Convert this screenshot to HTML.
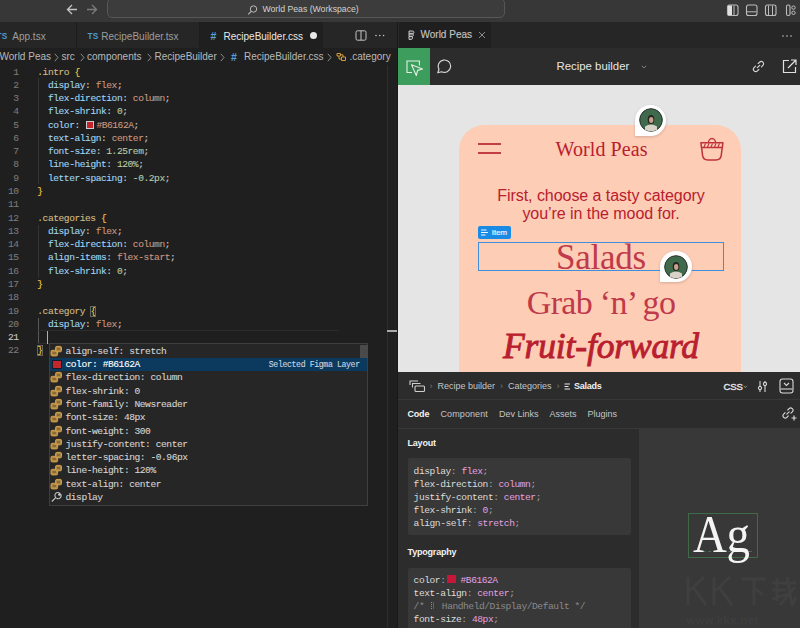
<!DOCTYPE html>
<html><head><meta charset="utf-8">
<style>
*{box-sizing:border-box;margin:0;padding:0}
html,body{width:800px;height:628px;overflow:hidden;background:#1f1f1f;font-family:"Liberation Sans",sans-serif;position:relative}
.a{position:absolute}
.mono{font-family:"Liberation Mono",monospace;font-size:9.6px;letter-spacing:-0.45px;white-space:pre;-webkit-text-stroke:0.1px currentColor}
.sans{font-family:"Liberation Sans",sans-serif;white-space:pre}
svg{display:block}
/* title */
#title{left:0;top:0;width:800px;height:22px;background:#373737}
#search{left:107px;top:-2px;width:398px;height:20px;border:1px solid #575757;border-radius:5px;background:#3c3c3c}
/* tabs */
#tabs{left:0;top:22px;width:398px;height:26px;background:#262626}
.tab{top:0;height:25px;color:#9d9d9d;font-size:10px;line-height:29px}
#crumb{left:0;top:48px;width:398px;height:17px;background:#1f1f1f;color:#b9b9b9;font-size:10px;line-height:18px}
/* editor */
.ln{left:0;width:18.6px;text-align:right;color:#7a7a7a;height:13.28px;line-height:13.28px}
.ln.cur{color:#c8c8c8}
.cl{left:37.3px;height:13.28px;line-height:13.28px;color:#cccccc}
.c{color:#cccccc}.p{color:#a0d6f2}.v{color:#cb977f}.n{color:#b8cca8}.s{color:#d3bc86}.b{color:#f2d23c}
.bb{outline:1px solid #666;outline-offset:-1px}
.sw{display:inline-block;width:8px;height:8px;background:#c4242c;border:1px solid #cfcfcf;margin:0 2px 0 1.3px;vertical-align:-1px}
.guide{width:1px;background:#333}
/* suggest */
#sugg{left:49px;top:343.3px;width:318.5px;height:162.9px;background:#262626;border:1px solid #3f3f3f}
.srow{left:0;width:316.5px;height:13.28px}
.srow.sel{background:#0c3a5e}
.srow .ic{position:absolute;left:0px;top:0.6px}
.srow .csw{display:block;width:7.6px;height:7.6px;background:#c0282d;left:3px;top:3px;outline:1px solid #1a1a2a}
.stxt{left:15.5px;top:0.6px;line-height:13.28px;color:#d4d4d4}
.sel .stxt{color:#ffffff}
.det{position:absolute;right:6.8px;top:0;line-height:13.28px;font-family:"Liberation Mono",monospace;font-size:8.2px;letter-spacing:-0.37px;color:#c9d6e3;white-space:pre;-webkit-text-stroke:0.1px currentColor}
/* right pane */
#rtabs{left:398px;top:22px;width:402px;height:26px;background:#262626}
#tool{left:398px;top:48px;width:402px;height:36.5px;background:#2c2c2c}
#preview{left:398px;top:84.5px;width:402px;height:287.5px;background:#e5e5e5;overflow:hidden}
#card{left:61px;top:40.5px;width:282px;height:300px;background:#fecdb6;border-radius:25px}
.red{color:#b8202f}
#dev{left:398px;top:372px;width:402px;height:256px;background:#2c2c2c}
.dt{font-size:9px;color:#c4c4c4;line-height:12px}
.dl{left:15.6px;height:13.2px;line-height:13.2px;color:#e8e8e8;-webkit-text-stroke:0 !important}
.k{color:#dcdcdc}.q{color:#a8a8a8}.w{color:#e6a0e0}.cm{color:#8a8a8a}
.csw2{display:inline-block;width:9.4px;height:8px;background:#c8163a;vertical-align:-0.5px;margin-left:1.2px;margin-right:4.5px}
.tok{display:inline-block;width:3px;height:7px;border-left:1px dotted #7a9a7a;border-right:1px solid #556b55;vertical-align:-0.5px;margin:0 2.5px 0 1.5px}
.bubble{background:#fff;border-radius:50% 50% 50% 0;box-shadow:0 1px 3px rgba(0,0,0,.18)}
.av{position:absolute;left:3.5px;top:3.5px;border-radius:50%;background:radial-gradient(circle at 50% 55%,#6b7a6a 0,#3b5a45 45%,#2c4434 100%)}
</style></head><body>

<!-- TITLE BAR -->
<div id="title" class="a">
  <svg class="a" style="left:66px;top:4px" width="12" height="11" viewBox="0 0 12 11"><path d="M6 1 L1.5 5.5 L6 10 M1.5 5.5 H11" fill="none" stroke="#c4c4c4" stroke-width="1.3"/></svg>
  <svg class="a" style="left:86px;top:4px" width="12" height="11" viewBox="0 0 12 11"><path d="M6 1 L10.5 5.5 L6 10 M10.5 5.5 H1" fill="none" stroke="#7c7c7c" stroke-width="1.3"/></svg>
  <div id="search" class="a"></div>
  <svg class="a" style="left:247px;top:4.5px" width="11" height="10" viewBox="0 0 11 10"><circle cx="6.5" cy="4" r="3.2" fill="none" stroke="#bbb" stroke-width="1"/><path d="M4.2 6.3 L1.2 9.3" stroke="#bbb" stroke-width="1.1"/></svg>
  <div class="a sans" style="left:262.5px;top:4px;font-size:8.7px;color:#d2d2d2;line-height:11px">World Peas (Workspace)</div>
  <svg class="a" style="left:726px;top:3.5px" width="72" height="13" viewBox="0 0 72 13">
    <rect x="1.5" y="1" width="10.5" height="10.5" rx="2" fill="none" stroke="#bdbdbd" stroke-width="1.1"/>
    <rect x="2" y="1.5" width="4" height="9.5" fill="#e0e0e0"/>
    <line x1="8" y1="1.5" x2="8" y2="11" stroke="#bdbdbd" stroke-width="1"/>
    <rect x="20.5" y="1" width="10.5" height="10.5" rx="2" fill="none" stroke="#bdbdbd" stroke-width="1.1"/>
    <line x1="21" y1="7.8" x2="30.5" y2="7.8" stroke="#bdbdbd" stroke-width="1"/>
    <rect x="39.5" y="1" width="10.5" height="10.5" rx="2" fill="none" stroke="#bdbdbd" stroke-width="1.1"/>
    <line x1="42.5" y1="1.5" x2="42.5" y2="11" stroke="#bdbdbd" stroke-width="1"/>
    <line x1="46.5" y1="1.5" x2="46.5" y2="11" stroke="#bdbdbd" stroke-width="1"/>
    <rect x="60.5" y="1" width="3.5" height="10.5" rx="1.5" fill="none" stroke="#bdbdbd" stroke-width="1.1"/>
    <circle cx="67.5" cy="3.6" r="1.7" fill="none" stroke="#bdbdbd" stroke-width="1"/>
    <circle cx="67.5" cy="8.8" r="1.7" fill="none" stroke="#bdbdbd" stroke-width="1"/>
  </svg>
</div>

<!-- LEFT TABS -->
<div id="tabs" class="a">
  <div class="a tab sans" style="left:0;width:76.5px;border-right:1px solid #1c1c1c"><span style="color:#4b9bd4;font-size:8.3px;font-weight:bold;position:absolute;left:-3.5px;top:0px;letter-spacing:0.2px">TS</span><span style="position:absolute;left:12.3px">App.tsx</span></div>
  <div class="a tab sans" style="left:76.5px;width:123.5px;border-right:1px solid #1c1c1c"><span style="color:#4b9bd4;font-size:8.3px;font-weight:bold;position:absolute;left:11px;top:0px;letter-spacing:0.2px">TS</span><span style="position:absolute;left:24.8px">RecipeBuilder.tsx</span></div>
  <div class="a tab sans" style="left:200px;width:123px;height:26px;background:#1f1f1f;color:#e8e8e8"><span style="color:#5c9fd2;font-size:10.5px;font-weight:bold;position:absolute;left:10.5px">#</span><span style="position:absolute;left:23.5px">RecipeBuilder.css</span><span style="position:absolute;left:109.5px;top:9.5px;width:7px;height:7px;border-radius:50%;background:#e8e8e8"></span></div>
  <svg class="a" style="left:355px;top:7.5px" width="32" height="11" viewBox="0 0 32 11">
    <rect x="1" y="0.8" width="10" height="9.4" rx="1.5" fill="none" stroke="#c4c4c4" stroke-width="1"/>
    <line x1="6" y1="1" x2="6" y2="10" stroke="#c4c4c4" stroke-width="1"/>
    <circle cx="21" cy="5.5" r="0.8" fill="#c4c4c4"/><circle cx="24.8" cy="5.5" r="0.8" fill="#c4c4c4"/><circle cx="28.6" cy="5.5" r="0.8" fill="#c4c4c4"/>
  </svg>
</div>

<!-- BREADCRUMB -->
<div id="crumb" class="a sans"><span class="a" style="left:-0.5px">World Peas</span><svg class="a" style="left:53.5px;top:4.5px" width="5" height="9" viewBox="0 0 5 9"><path d="M0.8 0.8 L4 4.5 L0.8 8.2" fill="none" stroke="#9a9a9a" stroke-width="0.9"/></svg><span class="a" style="left:61.5px">src</span><svg class="a" style="left:79.5px;top:4.5px" width="5" height="9" viewBox="0 0 5 9"><path d="M0.8 0.8 L4 4.5 L0.8 8.2" fill="none" stroke="#9a9a9a" stroke-width="0.9"/></svg><span class="a" style="left:87px">components</span><svg class="a" style="left:146.5px;top:4.5px" width="5" height="9" viewBox="0 0 5 9"><path d="M0.8 0.8 L4 4.5 L0.8 8.2" fill="none" stroke="#9a9a9a" stroke-width="0.9"/></svg><span class="a" style="left:154.5px">RecipeBuilder</span><svg class="a" style="left:219.5px;top:4.5px" width="5" height="9" viewBox="0 0 5 9"><path d="M0.8 0.8 L4 4.5 L0.8 8.2" fill="none" stroke="#9a9a9a" stroke-width="0.9"/></svg><span class="a" style="left:231px;color:#5c9fd2;font-weight:bold;font-size:10.5px">#</span><span class="a" style="left:244px">RecipeBuilder.css</span><svg class="a" style="left:327px;top:4.5px" width="5" height="9" viewBox="0 0 5 9"><path d="M0.8 0.8 L4 4.5 L0.8 8.2" fill="none" stroke="#9a9a9a" stroke-width="0.9"/></svg><svg class="a" style="left:335.5px;top:4px" width="11" height="10" viewBox="0 0 11 10"><path d="M1 1.5 H4.5 V4 H1 Z M5.5 5 H9.5 V8.5 H5.5 Z M4.5 2.8 H7 V5 M3 4 V7 H5.5" fill="none" stroke="#d19a3a" stroke-width="1"/></svg><span class="a" style="left:349.5px">.category</span></div>

<!-- EDITOR -->
<div class="a guide" style="left:37.8px;top:78px;height:106px"></div>
<div class="a guide" style="left:37.8px;top:224.5px;height:53px"></div>
<div class="a guide" style="left:37.5px;top:317.5px;height:26.5px;background:#585858"></div>
<div class="a" style="left:37px;top:330.4px;width:302px;height:13.6px;border-top:1px solid #2c2c2c;border-bottom:1px solid #2c2c2c"></div>
<div class="a mono ln" style="top:65.50px">1</div>
<div class="a mono cl" style="top:65.50px"><span class="s">.intro</span><span class="c"> </span><span class="b">{</span></div>
<div class="a mono ln" style="top:78.78px">2</div>
<div class="a mono cl" style="top:78.78px"><span class="c">  </span><span class="p">display</span><span class="c">: </span><span class="v">flex</span><span class="c">;</span></div>
<div class="a mono ln" style="top:92.06px">3</div>
<div class="a mono cl" style="top:92.06px"><span class="c">  </span><span class="p">flex-direction</span><span class="c">: </span><span class="v">column</span><span class="c">;</span></div>
<div class="a mono ln" style="top:105.34px">4</div>
<div class="a mono cl" style="top:105.34px"><span class="c">  </span><span class="p">flex-shrink</span><span class="c">: </span><span class="n">0</span><span class="c">;</span></div>
<div class="a mono ln" style="top:118.62px">5</div>
<div class="a mono cl" style="top:118.62px"><span class="c">  </span><span class="p">color</span><span class="c">: </span><span class="sw"></span><span class="v">#B6162A</span><span class="c">;</span></div>
<div class="a mono ln" style="top:131.90px">6</div>
<div class="a mono cl" style="top:131.90px"><span class="c">  </span><span class="p">text-align</span><span class="c">: </span><span class="v">center</span><span class="c">;</span></div>
<div class="a mono ln" style="top:145.18px">7</div>
<div class="a mono cl" style="top:145.18px"><span class="c">  </span><span class="p">font-size</span><span class="c">: </span><span class="n">1.25rem</span><span class="c">;</span></div>
<div class="a mono ln" style="top:158.46px">8</div>
<div class="a mono cl" style="top:158.46px"><span class="c">  </span><span class="p">line-height</span><span class="c">: </span><span class="n">120%</span><span class="c">;</span></div>
<div class="a mono ln" style="top:171.74px">9</div>
<div class="a mono cl" style="top:171.74px"><span class="c">  </span><span class="p">letter-spacing</span><span class="c">: </span><span class="n">-0.2px</span><span class="c">;</span></div>
<div class="a mono ln" style="top:185.02px">10</div>
<div class="a mono cl" style="top:185.02px"><span class="b">}</span></div>
<div class="a mono ln" style="top:198.30px">11</div>
<div class="a mono cl" style="top:198.30px"></div>
<div class="a mono ln" style="top:211.58px">12</div>
<div class="a mono cl" style="top:211.58px"><span class="s">.categories</span><span class="c"> </span><span class="b">{</span></div>
<div class="a mono ln" style="top:224.86px">13</div>
<div class="a mono cl" style="top:224.86px"><span class="c">  </span><span class="p">display</span><span class="c">: </span><span class="v">flex</span><span class="c">;</span></div>
<div class="a mono ln" style="top:238.14px">14</div>
<div class="a mono cl" style="top:238.14px"><span class="c">  </span><span class="p">flex-direction</span><span class="c">: </span><span class="v">column</span><span class="c">;</span></div>
<div class="a mono ln" style="top:251.42px">15</div>
<div class="a mono cl" style="top:251.42px"><span class="c">  </span><span class="p">align-items</span><span class="c">: </span><span class="v">flex-start</span><span class="c">;</span></div>
<div class="a mono ln" style="top:264.70px">16</div>
<div class="a mono cl" style="top:264.70px"><span class="c">  </span><span class="p">flex-shrink</span><span class="c">: </span><span class="n">0</span><span class="c">;</span></div>
<div class="a mono ln" style="top:277.98px">17</div>
<div class="a mono cl" style="top:277.98px"><span class="b">}</span></div>
<div class="a mono ln" style="top:291.26px">18</div>
<div class="a mono cl" style="top:291.26px"></div>
<div class="a mono ln" style="top:304.54px">19</div>
<div class="a mono cl" style="top:304.54px"><span class="s">.category</span><span class="c"> </span><span class="b bb">{</span></div>
<div class="a mono ln" style="top:317.82px">20</div>
<div class="a mono cl" style="top:317.82px"><span class="c">  </span><span class="p">display</span><span class="c">: </span><span class="v">flex</span><span class="c">;</span></div>
<div class="a mono ln cur" style="top:331.10px">21</div>
<div class="a mono cl" style="top:331.10px"></div>
<div class="a mono ln" style="top:344.38px">22</div>
<div class="a mono cl" style="top:344.38px"><span class="b bb">}</span></div>
<div class="a" style="left:47.3px;top:331px;width:1.2px;height:12.5px;background:#aeafad"></div>
<div class="a" style="left:386.5px;top:64.5px;width:1px;height:564px;background:#2e2e2e"></div>
<div class="a" style="left:387px;top:330px;width:10px;height:1.6px;background:#a8a8a8"></div><div class="a" style="left:397px;top:22px;width:1px;height:606px;background:#181818"></div>

<!-- SUGGEST -->
<div id="sugg" class="a">
<div class="a srow" style="top:0.00px"><svg class="ic" width="13" height="12" viewBox="0 0 13 12"><rect x="1" y="5.3" width="6.6" height="5.6" rx="1.2" fill="#b08a45" stroke="#d4a24a" stroke-width="1"/><rect x="5.6" y="1.4" width="5.9" height="5.4" rx="1.2" fill="#b08a45" stroke="#d4a24a" stroke-width="1"/><line x1="2.5" y1="8" x2="6" y2="8" stroke="#5a4520" stroke-width="0.9"/><line x1="7" y1="4" x2="10" y2="4" stroke="#5a4520" stroke-width="0.9"/></svg><span class="a mono stxt">align-self: stretch</span></div>
<div class="a srow sel" style="top:13.28px"><span class="ic csw"></span><span class="a mono stxt">color: #B6162A</span><span class="det">Selected Figma Layer</span></div>
<div class="a srow" style="top:26.56px"><svg class="ic" width="13" height="12" viewBox="0 0 13 12"><rect x="1" y="5.3" width="6.6" height="5.6" rx="1.2" fill="#b08a45" stroke="#d4a24a" stroke-width="1"/><rect x="5.6" y="1.4" width="5.9" height="5.4" rx="1.2" fill="#b08a45" stroke="#d4a24a" stroke-width="1"/><line x1="2.5" y1="8" x2="6" y2="8" stroke="#5a4520" stroke-width="0.9"/><line x1="7" y1="4" x2="10" y2="4" stroke="#5a4520" stroke-width="0.9"/></svg><span class="a mono stxt">flex-direction: column</span></div>
<div class="a srow" style="top:39.84px"><svg class="ic" width="13" height="12" viewBox="0 0 13 12"><rect x="1" y="5.3" width="6.6" height="5.6" rx="1.2" fill="#b08a45" stroke="#d4a24a" stroke-width="1"/><rect x="5.6" y="1.4" width="5.9" height="5.4" rx="1.2" fill="#b08a45" stroke="#d4a24a" stroke-width="1"/><line x1="2.5" y1="8" x2="6" y2="8" stroke="#5a4520" stroke-width="0.9"/><line x1="7" y1="4" x2="10" y2="4" stroke="#5a4520" stroke-width="0.9"/></svg><span class="a mono stxt">flex-shrink: 0</span></div>
<div class="a srow" style="top:53.12px"><svg class="ic" width="13" height="12" viewBox="0 0 13 12"><rect x="1" y="5.3" width="6.6" height="5.6" rx="1.2" fill="#b08a45" stroke="#d4a24a" stroke-width="1"/><rect x="5.6" y="1.4" width="5.9" height="5.4" rx="1.2" fill="#b08a45" stroke="#d4a24a" stroke-width="1"/><line x1="2.5" y1="8" x2="6" y2="8" stroke="#5a4520" stroke-width="0.9"/><line x1="7" y1="4" x2="10" y2="4" stroke="#5a4520" stroke-width="0.9"/></svg><span class="a mono stxt">font-family: Newsreader</span></div>
<div class="a srow" style="top:66.40px"><svg class="ic" width="13" height="12" viewBox="0 0 13 12"><rect x="1" y="5.3" width="6.6" height="5.6" rx="1.2" fill="#b08a45" stroke="#d4a24a" stroke-width="1"/><rect x="5.6" y="1.4" width="5.9" height="5.4" rx="1.2" fill="#b08a45" stroke="#d4a24a" stroke-width="1"/><line x1="2.5" y1="8" x2="6" y2="8" stroke="#5a4520" stroke-width="0.9"/><line x1="7" y1="4" x2="10" y2="4" stroke="#5a4520" stroke-width="0.9"/></svg><span class="a mono stxt">font-size: 48px</span></div>
<div class="a srow" style="top:79.68px"><svg class="ic" width="13" height="12" viewBox="0 0 13 12"><rect x="1" y="5.3" width="6.6" height="5.6" rx="1.2" fill="#b08a45" stroke="#d4a24a" stroke-width="1"/><rect x="5.6" y="1.4" width="5.9" height="5.4" rx="1.2" fill="#b08a45" stroke="#d4a24a" stroke-width="1"/><line x1="2.5" y1="8" x2="6" y2="8" stroke="#5a4520" stroke-width="0.9"/><line x1="7" y1="4" x2="10" y2="4" stroke="#5a4520" stroke-width="0.9"/></svg><span class="a mono stxt">font-weight: 300</span></div>
<div class="a srow" style="top:92.96px"><svg class="ic" width="13" height="12" viewBox="0 0 13 12"><rect x="1" y="5.3" width="6.6" height="5.6" rx="1.2" fill="#b08a45" stroke="#d4a24a" stroke-width="1"/><rect x="5.6" y="1.4" width="5.9" height="5.4" rx="1.2" fill="#b08a45" stroke="#d4a24a" stroke-width="1"/><line x1="2.5" y1="8" x2="6" y2="8" stroke="#5a4520" stroke-width="0.9"/><line x1="7" y1="4" x2="10" y2="4" stroke="#5a4520" stroke-width="0.9"/></svg><span class="a mono stxt">justify-content: center</span></div>
<div class="a srow" style="top:106.24px"><svg class="ic" width="13" height="12" viewBox="0 0 13 12"><rect x="1" y="5.3" width="6.6" height="5.6" rx="1.2" fill="#b08a45" stroke="#d4a24a" stroke-width="1"/><rect x="5.6" y="1.4" width="5.9" height="5.4" rx="1.2" fill="#b08a45" stroke="#d4a24a" stroke-width="1"/><line x1="2.5" y1="8" x2="6" y2="8" stroke="#5a4520" stroke-width="0.9"/><line x1="7" y1="4" x2="10" y2="4" stroke="#5a4520" stroke-width="0.9"/></svg><span class="a mono stxt">letter-spacing: -0.96px</span></div>
<div class="a srow" style="top:119.52px"><svg class="ic" width="13" height="12" viewBox="0 0 13 12"><rect x="1" y="5.3" width="6.6" height="5.6" rx="1.2" fill="#b08a45" stroke="#d4a24a" stroke-width="1"/><rect x="5.6" y="1.4" width="5.9" height="5.4" rx="1.2" fill="#b08a45" stroke="#d4a24a" stroke-width="1"/><line x1="2.5" y1="8" x2="6" y2="8" stroke="#5a4520" stroke-width="0.9"/><line x1="7" y1="4" x2="10" y2="4" stroke="#5a4520" stroke-width="0.9"/></svg><span class="a mono stxt">line-height: 120%</span></div>
<div class="a srow" style="top:132.80px"><svg class="ic" width="13" height="12" viewBox="0 0 13 12"><rect x="1" y="5.3" width="6.6" height="5.6" rx="1.2" fill="#b08a45" stroke="#d4a24a" stroke-width="1"/><rect x="5.6" y="1.4" width="5.9" height="5.4" rx="1.2" fill="#b08a45" stroke="#d4a24a" stroke-width="1"/><line x1="2.5" y1="8" x2="6" y2="8" stroke="#5a4520" stroke-width="0.9"/><line x1="7" y1="4" x2="10" y2="4" stroke="#5a4520" stroke-width="0.9"/></svg><span class="a mono stxt">text-align: center</span></div>
<div class="a srow" style="top:146.08px"><svg class="ic" width="13" height="12" viewBox="0 0 13 12"><path d="M1.8 10.5 L6 6.3 M5.8 6.5 A2.9 2.9 0 1 1 9.8 2.3 L8.5 3.6 L9.3 4.4 L10.6 3.1 A2.9 2.9 0 0 1 6.4 7" fill="none" stroke="#c4c4c4" stroke-width="1.1" stroke-linejoin="round"/></svg><span class="a mono stxt">display</span></div>
<div class="a" style="left:309.5px;top:0.5px;width:8px;height:13.5px;background:#4a4a4a"></div>
</div>

<!-- RIGHT TABS -->
<div id="rtabs" class="a">
  <div class="a" style="left:0;top:0;width:93px;height:26px;background:#1f1f1f;border-left:1px solid #2a2a2a"></div>
  <svg class="a" style="left:9.5px;top:8px" width="7" height="10" viewBox="0 0 7 10"><path d="M1 1 H4.5 A1.4 1.4 0 0 1 4.5 3.8 H1 Z M1 3.8 H4.5 A1.4 1.4 0 0 1 4.5 6.4 H1 Z M1 6.4 H3.5 A1.6 1.6 0 0 1 3.5 9.4 H1 Z" fill="#3a3a3a" stroke="#c8c8c8" stroke-width="1"/></svg>
  <div class="a sans" style="left:22.5px;top:0;font-size:10px;line-height:26px;color:#c4c4c4;-webkit-text-stroke:0.15px #c4c4c4">World Peas</div>
  <svg class="a" style="left:80px;top:9px" width="8" height="8" viewBox="0 0 8 8"><path d="M1 1 L7 7 M7 1 L1 7" stroke="#8c8c8c" stroke-width="1"/></svg>
  <svg class="a" style="left:383px;top:11.5px" width="14" height="4" viewBox="0 0 14 4"><circle cx="2" cy="2" r="0.8" fill="#c4c4c4"/><circle cx="6" cy="2" r="0.8" fill="#c4c4c4"/><circle cx="10" cy="2" r="0.8" fill="#c4c4c4"/></svg>
</div>

<!-- TOOLBAR -->
<div id="tool" class="a">
  <div class="a" style="left:0;top:0;width:31.5px;height:36.5px;background:#3c9d5c"></div>
  <svg class="a" style="left:7px;top:10.5px" width="19" height="18" viewBox="0 0 19 18"><path d="M7 13.5 H2 V2 H14.4 V6.5" fill="none" stroke="#e3efe5" stroke-width="1.1"/><path d="M6.5 5.8 L17.5 10 L12.6 11.4 L11.3 16.5 Z" fill="none" stroke="#e3efe5" stroke-width="1.1" stroke-linejoin="round"/></svg>
  <svg class="a" style="left:38px;top:10.5px" width="16" height="16" viewBox="0 0 16 16"><path d="M1.8 13.8 L3 10.2 A6.2 6.2 0 1 1 5.6 12.7 Z" fill="none" stroke="#d8d8d8" stroke-width="1.15" stroke-linejoin="round"/></svg>
  <div class="a sans" style="left:158.5px;top:11.5px;font-size:11.4px;color:#e6e6e6;line-height:13px">Recipe builder</div>
  <svg class="a" style="left:242.5px;top:16.5px" width="6" height="4" viewBox="0 0 6 4"><path d="M0.8 0.8 L3 3 L5.2 0.8" fill="none" stroke="#8a8a8a" stroke-width="0.9"/></svg>
  <svg class="a" style="left:353.5px;top:11.5px" width="13" height="13" viewBox="0 0 13 13"><path d="M5.3 7.7 L7.7 5.3 M6.2 3.5 L7.6 2.1 A2.2 2.2 0 0 1 10.9 5.4 L9.5 6.8 M6.8 9.5 L5.4 10.9 A2.2 2.2 0 0 1 2.1 7.6 L3.5 6.2" fill="none" stroke="#d8d8d8" stroke-width="1.15" stroke-linecap="round"/></svg>
  <svg class="a" style="left:384px;top:11px" width="16" height="15" viewBox="0 0 16 15"><path d="M7 1.5 H1.5 V13.5 H13.5 V8" fill="none" stroke="#e0e0e0" stroke-width="1.2"/><path d="M6 9 L14 1 M9 1 H14 V6" fill="none" stroke="#e0e0e0" stroke-width="1.2"/></svg>
</div>

<!-- PREVIEW -->
<div id="preview" class="a">
  <div id="card" class="a"></div>
  <div class="a" style="left:80px;top:58.5px;width:22.5px;height:2px;background:#c33d45"></div>
  <div class="a" style="left:80px;top:67px;width:22.5px;height:2px;background:#c33d45"></div>
  <div class="a red" style="left:157.5px;top:53px;font-family:'Liberation Serif',serif;font-size:20px;line-height:23px;white-space:pre;letter-spacing:0.1px">World Peas</div>
  <svg class="a" style="left:302px;top:52.5px" width="24" height="25" viewBox="0 0 24 25"><path d="M8.4 6 A3.6 4.4 0 0 1 15.6 6" fill="none" stroke="#c0323a" stroke-width="1.5"/><path d="M0.9 5.8 H22.9 L22.3 10.6 H1.5 Z" fill="none" stroke="#c0323a" stroke-width="1.5" stroke-linejoin="round"/><path d="M4 10 L5.5 6.5 M7.5 10 L9 6.5 M11 10 L12.5 6.5 M14.5 10 L16 6.5 M18 10 L19.5 6.5" stroke="#c0323a" stroke-width="1.1"/><path d="M1.6 10.6 L2.6 18.6 Q3.3 22.9 7.8 22.9 H16 Q20.5 22.9 21.2 18.6 L22.2 10.6" fill="none" stroke="#c0323a" stroke-width="1.5" stroke-linejoin="round"/></svg>
  <div class="a red sans" style="left:62px;top:102px;width:282px;text-align:center;font-size:16px;line-height:18.6px;letter-spacing:-0.05px">First, choose a tasty category<br>you’re in the mood for.</div>
  <div class="a" style="left:80px;top:141px;width:32.5px;height:13.3px;background:#1a8be4;border-radius:2px"></div>
  <svg class="a" style="left:83px;top:144.5px" width="8" height="8" viewBox="0 0 8 8"><path d="M0 1 H5.5 M0 3.5 H7 M0 6 H4.5" stroke="#f2f8ff" stroke-width="1.2"/></svg>
  <div class="a sans" style="left:93.8px;top:143.3px;font-size:7.8px;line-height:9px;color:#e8f4ff;-webkit-text-stroke:0.2px #e8f4ff">Item</div>
  <div class="a" style="left:80px;top:157.5px;width:245.5px;height:28.5px;border:1.5px solid #3f8fde"></div>
  <div class="a red" style="left:62px;top:153.5px;width:282px;text-align:center;font-family:'Liberation Serif',serif;font-size:35px;line-height:40px;white-space:pre;letter-spacing:-0.25px;color:#bf3a4a">Salads</div>
  <div class="a red" style="left:62px;top:198.5px;width:282px;text-align:center;font-family:'Liberation Serif',serif;font-size:34px;line-height:40px;white-space:pre;letter-spacing:-0.7px;color:#bf3a4a">Grab ‘n’ go</div>
  <div class="a red" style="left:62px;top:241px;width:282px;text-align:center;font-family:'Liberation Serif',serif;font-weight:normal;font-style:italic;font-size:35.5px;line-height:40px;white-space:pre;letter-spacing:-0.15px;-webkit-text-stroke:0.9px #b8202f">Fruit-forward</div>
  <div class="a bubble" style="left:237.1px;top:20.3px;width:30.8px;height:31px"><svg class="a" style="left:3.6px;top:3.5px" width="24" height="24" viewBox="0 0 24 24"><defs><clipPath id="cc1"><circle cx="12" cy="12" r="11.2"/></clipPath></defs><circle cx="12" cy="12" r="11.3" fill="#3f6a4c" stroke="#2a2f2a" stroke-width="1"/><g clip-path="url(#cc1)"><path d="M6 18.5 Q12 14.5 18 18.5 V25 H6 Z" fill="#d8d2c8"/><ellipse cx="12" cy="11.5" rx="3.3" ry="4.6" fill="#2a2220"/><ellipse cx="12.2" cy="12" rx="2.2" ry="2.9" fill="#c9a08e"/></g></svg></div>
  <div class="a bubble" style="left:262px;top:166.5px;width:31.5px;height:31px"><svg class="a" style="left:3.6px;top:3.5px" width="24" height="24" viewBox="0 0 24 24"><defs><clipPath id="cc2"><circle cx="12" cy="12" r="11.2"/></clipPath></defs><circle cx="12" cy="12" r="11.3" fill="#3f6a4c" stroke="#2a2f2a" stroke-width="1"/><g clip-path="url(#cc2)"><path d="M6 18.5 Q12 14.5 18 18.5 V25 H6 Z" fill="#d8d2c8"/><ellipse cx="12" cy="11.5" rx="3.3" ry="4.6" fill="#2a2220"/><ellipse cx="12.2" cy="12" rx="2.2" ry="2.9" fill="#c9a08e"/></g></svg></div>
</div>

<!-- DEV PANEL -->
<div id="dev" class="a">
  <div class="a" style="left:0;top:27px;width:402px;height:1px;background:#383838"></div>
  <div class="a" style="left:0;top:55.5px;width:402px;height:1px;background:#383838"></div>
  <svg class="a" style="left:10.5px;top:8px" width="17" height="13" viewBox="0 0 17 13"><path d="M1 5 V1 H9 M3.5 7.5 V3.5 H11.5" fill="none" stroke="#cfcfcf" stroke-width="1.1"/><rect x="6" y="6" width="9.5" height="5.5" rx="1" fill="none" stroke="#cfcfcf" stroke-width="1.1"/></svg>
  <div class="a sans dt" style="left:31.5px;top:8px;color:#777">›</div>
  <div class="a sans dt" style="left:39.5px;top:8px">Recipe builder</div>
  <div class="a sans dt" style="left:102px;top:8px;color:#777">›</div>
  <div class="a sans dt" style="left:110px;top:8px">Categories</div>
  <div class="a sans dt" style="left:158.5px;top:8px;color:#777">›</div>
  <svg class="a" style="left:165.5px;top:10.5px" width="7" height="7" viewBox="0 0 7 7"><path d="M0.5 1 H6 M0.5 3.5 H4.5 M0.5 6 H6" stroke="#e8e8e8" stroke-width="1.1"/></svg>
  <div class="a sans dt" style="left:176px;top:8px;color:#f0f0f0;font-weight:bold;letter-spacing:-0.25px">Salads</div>
  <div class="a sans dt" style="left:325.5px;top:8.5px;color:#e6e6e6;font-size:9.6px;letter-spacing:-0.2px;-webkit-text-stroke:0.35px #e6e6e6">CSS</div>
  <svg class="a" style="left:345px;top:12.5px" width="5" height="4" viewBox="0 0 5 4"><path d="M0.7 0.8 L2.3 2.5 L3.9 0.8" fill="none" stroke="#aaa" stroke-width="0.8"/></svg>
  <svg class="a" style="left:358.5px;top:7.5px" width="11" height="13" viewBox="0 0 11 13"><path d="M3 1 V12 M8 1 V12" stroke="#d8d8d8" stroke-width="1.1"/><circle cx="3" cy="8" r="1.6" fill="#2c2c2c" stroke="#d8d8d8" stroke-width="1.1"/><circle cx="8" cy="4" r="1.6" fill="#2c2c2c" stroke="#d8d8d8" stroke-width="1.1"/></svg>
  <svg class="a" style="left:381px;top:6px" width="15" height="16" viewBox="0 0 15 16"><rect x="1" y="1" width="13" height="14" rx="2.5" fill="none" stroke="#d8d8d8" stroke-width="1.1"/><path d="M1.5 11 H13.5" stroke="#d8d8d8" stroke-width="1.1"/><path d="M5 5 L7.5 7.5 L10 5" fill="none" stroke="#d8d8d8" stroke-width="1.1"/></svg>

  <div class="a sans dt" style="left:9.5px;top:36px;color:#f2f2f2;font-weight:bold;letter-spacing:-0.2px">Code</div>
  <div class="a sans dt" style="left:42.5px;top:36px;letter-spacing:0.1px">Component</div>
  <div class="a sans dt" style="left:101px;top:36px">Dev Links</div>
  <div class="a sans dt" style="left:151.5px;top:36px">Assets</div>
  <div class="a sans dt" style="left:189.5px;top:36px">Plugins</div>
  <svg class="a" style="left:383.5px;top:35px" width="16" height="14" viewBox="0 0 16 14"><path d="M4.8 7.2 L7.2 4.8 M5.7 3 L7.1 1.6 A2.1 2.1 0 0 1 10.3 4.8 L8.9 6.2 M6.3 8.9 L4.9 10.3 A2.1 2.1 0 0 1 1.7 7.1 L3.1 5.7" fill="none" stroke="#d8d8d8" stroke-width="1.1" stroke-linecap="round"/><path d="M12 8.5 V13.5 M9.5 11 H14.5" stroke="#d8d8d8" stroke-width="1.2"/></svg>

  <div class="a" style="left:241px;top:56.5px;width:161px;height:200px;background:#383838"></div>
  <div class="a sans dt" style="left:9.5px;top:64.5px;color:#f2f2f2;font-weight:bold;letter-spacing:-0.2px">Layout</div>
  <div class="a" style="left:9.5px;top:86px;width:223.5px;height:76.5px;background:#383838;border-radius:2px"></div>
  <div class="a sans dt" style="left:9.5px;top:174px;color:#f2f2f2;font-weight:bold;letter-spacing:-0.2px">Typography</div>
  <div class="a" style="left:9.5px;top:195.5px;width:223.5px;height:70px;background:#383838;border-radius:2px"></div>
</div>
<div class="a" style="left:398px;top:0;width:402px;height:628px;pointer-events:none">
<div class="a mono dl" style="top:464.50px"><span class="k">display</span><span class="q">: </span><span class="w">flex</span><span class="q">;</span></div>
<div class="a mono dl" style="top:477.70px"><span class="k">flex-direction</span><span class="q">: </span><span class="w">column</span><span class="q">;</span></div>
<div class="a mono dl" style="top:490.90px"><span class="k">justify-content</span><span class="q">: </span><span class="w">center</span><span class="q">;</span></div>
<div class="a mono dl" style="top:504.10px"><span class="k">flex-shrink</span><span class="q">: </span><span class="w">0</span><span class="q">;</span></div>
<div class="a mono dl" style="top:517.30px"><span class="k">align-self</span><span class="q">: </span><span class="w">stretch</span><span class="q">;</span></div>
<div class="a mono dl" style="top:573.50px"><span class="k">color</span><span class="q">:</span><span class="csw2"></span><span class="w">#B6162A</span></div>
<div class="a mono dl" style="top:586.70px"><span class="k">text-align</span><span class="q">: </span><span class="w">center</span><span class="q">;</span></div>
<div class="a mono dl" style="top:599.90px"><span class="cm">/* </span><span class="tok"></span><span class="cm"> Handheld/Display/Default */</span></div>
<div class="a mono dl" style="top:613.10px"><span class="k">font-size</span><span class="q">: </span><span class="w">48px</span><span class="q">;</span></div>
</div>

<!-- Ag preview -->
<div class="a" style="left:688px;top:513px;width:69.5px;height:45px;border:1px solid #3e6a48"></div>
<div class="a" style="left:698px;top:551.3px;width:54px;height:0;border-top:1px dashed #4a6a50"></div>
<div class="a" style="left:693px;top:505px;font-family:'Liberation Serif',serif;font-size:52px;line-height:60px;color:#f4f4f4;white-space:pre;letter-spacing:-0.3px;transform:scaleX(0.9);transform-origin:0 0">Ag</div>

<!-- watermark -->
<svg class="a" style="left:684px;top:575px" width="116" height="53" viewBox="0 0 116 53">
<g fill="none" stroke="rgba(255,255,255,0.035)" stroke-width="3" stroke-linejoin="round">
<path d="M4 2 V30 M4 17 L20 2 M9 12 L22 30"/>
<path d="M30 2 V30 M30 17 L46 2 M35 12 L48 30"/>
<path d="M58 4 H82 M70 4 V30 M72 14 L79 20"/>
<path d="M88 8 H112 M93 3 V26 M88 15 H102 M88 24 L104 19 M103 2 L108 30 L112 22 M96 30 L111 12"/>
</g>
<g fill="rgba(255,255,255,0.04)"><text x="2" y="49" font-family="Liberation Sans" font-weight="bold" font-size="11.5" letter-spacing="0.3">www.kkx.net</text></g>
</svg>
</body></html>
